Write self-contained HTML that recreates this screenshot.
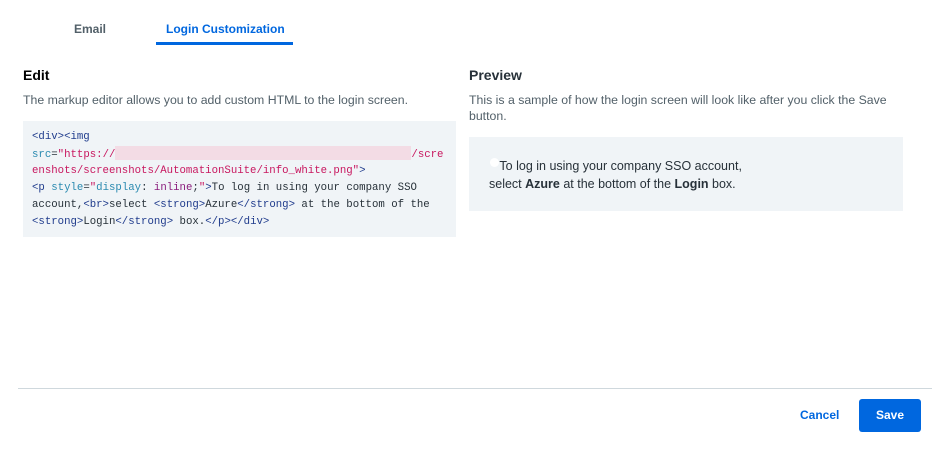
<!DOCTYPE html>
<html><head><meta charset="utf-8"><style>
body{margin:0;width:951px;height:461px;background:#fff;font-family:"Liberation Sans",sans-serif;position:relative;overflow:hidden;color:#273139}
.a{position:absolute}
.tab{font-size:12px;font-weight:bold;top:22px}
pre{margin:0;font-family:"Liberation Mono",monospace;font-size:10.7px;line-height:16.7px;color:#273139}
.t{color:#1f3b8c}.at{color:#2a8ab0}.s{color:#c8175f}.k{color:#8a1c7c}
</style></head><body>
<div class="a tab" style="left:74px;color:#526069">Email</div>
<div class="a tab" style="left:166px;color:#0067df">Login Customization</div>
<div class="a" style="left:156px;top:42px;width:137px;height:3px;background:#0067df"></div>

<div class="a" style="left:23px;top:67px;font-size:14px;font-weight:bold;color:#000">Edit</div>
<div class="a" style="left:23px;top:93px;font-size:12.3px;color:#526069">The markup editor allows you to add custom HTML to the login screen.</div>
<div class="a" style="left:23px;top:121px;width:433px;height:116px;background:#f0f4f7"></div>
<pre class="a" style="left:32px;top:129px"><span class="t">&lt;div&gt;&lt;img</span>
<span class="at">src</span>=<span class="s">"https://</span><span style="display:inline-block;width:296px;height:14px;vertical-align:-3px;background:#f3dce5"></span><span class="s">/scre</span>
<span class="s">enshots/screenshots/AutomationSuite/info_white.png"</span><span class="t">&gt;</span>
<span class="t">&lt;p</span> <span class="at">style</span>=<span class="s">"</span><span class="at">display</span>: <span class="k">inline</span>;<span class="s">"</span><span class="t">&gt;</span>To log in using your company SSO
account,<span class="t">&lt;br&gt;</span>select <span class="t">&lt;strong&gt;</span>Azure<span class="t">&lt;/strong&gt;</span> at the bottom of the
<span class="t">&lt;strong&gt;</span>Login<span class="t">&lt;/strong&gt;</span> box.<span class="t">&lt;/p&gt;&lt;/div&gt;</span></pre>

<div class="a" style="left:469px;top:67px;font-size:14px;font-weight:bold;color:#273139">Preview</div>
<div class="a" style="left:469px;top:92px;width:430px;font-size:12.3px;line-height:16px;color:#526069">This is a sample of how the login screen will look like after you click the Save button.</div>
<div class="a" style="left:469px;top:137px;width:434px;height:74px;background:#f0f4f7"></div>
<div class="a" style="left:490px;top:158px;width:9px;height:9px;border-radius:50%;background:#fff"></div>
<div class="a" style="left:489px;top:157px;font-size:12.5px;line-height:18px;color:#273139">&nbsp;&nbsp;&nbsp;To log in using your company SSO account,<br>select <b>Azure</b> at the bottom of the <b>Login</b> box.</div>

<div class="a" style="left:18px;top:388px;width:914px;height:1px;background:#cfd8dd"></div>
<div class="a" style="left:800px;top:408px;font-size:12px;font-weight:bold;color:#0067df">Cancel</div>
<div class="a" style="left:859px;top:399px;width:62px;height:33px;border-radius:3px;background:#0067df;color:#fff;font-size:12px;font-weight:bold;text-align:center;line-height:33px">Save</div>
</body></html>
